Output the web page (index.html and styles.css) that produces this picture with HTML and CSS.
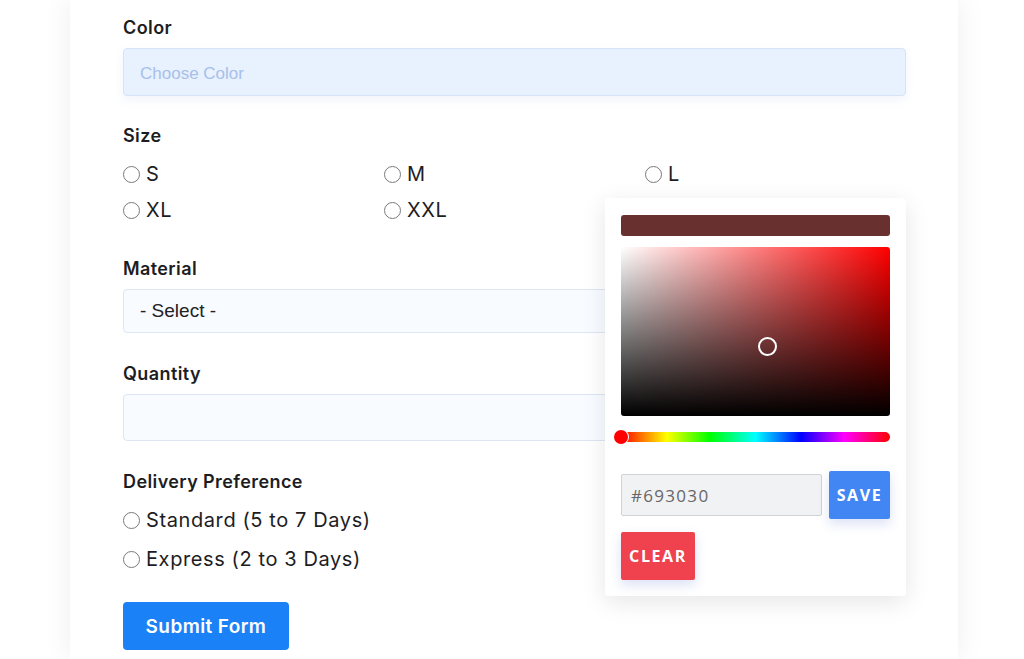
FILE: index.html
```html
<!DOCTYPE html>
<html lang="en">
<head>
  <meta charset="UTF-8">
  <meta name="viewport" content="width=device-width, initial-scale=1.0">
  <title>Product Form - Color Picker</title>
  <link rel="stylesheet" href="styles.css">
</head>
<body>
  <div class="card">
    <form class="form" onsubmit="return false">
      <div class="field color-field">
        <label class="label" for="color">Color</label>
        <div class="color-wrap">
          <input class="input color-input" id="color" type="text" placeholder="Choose Color">

          <div class="picker">
            <div class="swatch"></div>
            <div class="sat-box">
              <span class="sat-handle"></span>
            </div>
            <div class="hue">
              <span class="hue-handle"></span>
            </div>
            <div class="picker-row">
              <input class="hex" type="text" value="#693030">
              <button class="pbtn save" type="button">Save</button>
            </div>
            <button class="pbtn clear" type="button">Clear</button>
          </div>
        </div>
      </div>

      <div class="field sizes">
        <span class="label">Size</span>
        <div class="radio-grid">
          <label class="radio"><input type="radio" name="size"> S</label>
          <label class="radio"><input type="radio" name="size"> M</label>
          <label class="radio"><input type="radio" name="size"> L</label>
          <label class="radio"><input type="radio" name="size"> XL</label>
          <label class="radio"><input type="radio" name="size"> XXL</label>
        </div>
      </div>

      <div class="field">
        <label class="label" for="material">Material</label>
        <div class="input select" id="material">- Select -</div>
      </div>

      <div class="field">
        <label class="label" for="qty">Quantity</label>
        <input class="input qty" id="qty" type="text">
      </div>

      <div class="field">
        <span class="label">Delivery Preference</span>
        <div class="radio-list">
          <label class="radio"><input type="radio" name="delivery"> Standard (5 to 7 Days)</label>
          <label class="radio"><input type="radio" name="delivery"> Express (2 to 3 Days)</label>
        </div>
      </div>

      <button class="submit" type="submit">Submit Form</button>
    </form>
  </div>
</body>
</html>
```

FILE: styles.css
```css
body {
  margin: 0;
  background-color: #ffffff;
  font-family: Inter, Lato, "Noto Sans", sans-serif;
  color: #1d1d1f;
}
.card {
  width: 888px;
  margin-left: 70px;
  min-height: 659px;
  box-sizing: border-box;
  padding: 16px 52px 0 53px;
  background-color: #fff;
  box-shadow: 0 0 28px rgba(0, 0, 0, 0.07);
}
.field {
  margin-bottom: 29px;
}
.color-field {
  margin-bottom: 28px;
}
.sizes {
  margin-bottom: 33px;
}
.label {
  display: block;
  font-size: 18px;
  line-height: 24px;
  font-weight: 600;
  letter-spacing: 0.4px;
  margin-bottom: 8px;
}
.input {
  display: block;
  width: 100%;
  box-sizing: border-box;
  border: 1px solid #dde6f3;
  border-radius: 4px;
  background-color: #f8fbff;
  font-family: "Liberation Sans", Arial, sans-serif;
  outline: none;
}
.color-wrap {
  position: relative;
}
.color-input {
  height: 48px;
  padding: 3px 16px 0;
  font-size: 17px;
  background-color: #e8f1fe;
  border-color: #d6e4f8;
  box-shadow: 0 4px 10px rgba(80, 120, 200, 0.08);
}
.color-input::placeholder {
  color: #a7bfea;
}
.select {
  height: 44px;
  line-height: 42px;
  margin-top: 1px;
  padding: 0 16px;
  font-size: 19px;
  color: #222;
}
.qty {
  height: 47px;
}

/* radios */
.radio-grid {
  display: grid;
  grid-template-columns: repeat(3, 261px);
  row-gap: 8px;
  margin-top: 12px;
}
.radio-list {
  display: flex;
  flex-direction: column;
  gap: 11px;
  margin-top: 12px;
}
.radio {
  display: flex;
  align-items: center;
  gap: 6px;
  font-size: 20px;
  line-height: 28px;
  letter-spacing: 0.6px;
  color: #1d1d1f;
}
.radio input {
  appearance: none;
  -webkit-appearance: none;
  width: 17px;
  height: 17px;
  margin: 0;
  border: 1px solid #7a7a7a;
  border-radius: 50%;
  background-color: #fff;
}

.submit {
  width: 166px;
  height: 48px;
  border: none;
  border-radius: 4px;
  background-color: #1a82f6;
  color: #fff;
  font-family: Inter, Lato, "Noto Sans", sans-serif;
  font-size: 19px;
  font-weight: 600;
  letter-spacing: 0.4px;
  cursor: pointer;
}

/* color picker popup */
.picker {
  position: absolute;
  top: 150px;
  left: 482px;
  width: 301px;
  height: 398px;
  box-sizing: border-box;
  padding: 17px 16px;
  background-color: #fff;
  border-radius: 3px;
  box-shadow: 0 6px 24px rgba(0, 0, 0, 0.1);
}
.swatch {
  height: 21px;
  border-radius: 3px;
  background-color: #693030;
}
.sat-box {
  position: relative;
  height: 169px;
  margin-top: 11px;
  border-radius: 3px;
  background:
    linear-gradient(to bottom, rgba(0, 0, 0, 0), #000),
    linear-gradient(to right, #fff, #ff0000);
}
.sat-handle {
  position: absolute;
  left: 137px;
  top: 90px;
  width: 15px;
  height: 15px;
  border: 2px solid #fff;
  border-radius: 50%;
}
.hue {
  position: relative;
  height: 10px;
  margin-top: 16px;
  border-radius: 5px;
  background: linear-gradient(to right, #f00 0%, #ff0 17%, #0f0 33%, #0ff 50%, #00f 67%, #f0f 83%, #f00 100%);
}
.hue-handle {
  position: absolute;
  left: -7px;
  top: -2px;
  width: 14px;
  height: 14px;
  border-radius: 50%;
  background-color: #ff0000;
  box-shadow: 0 0 0 1px #fff;
}
.picker-row {
  display: flex;
  align-items: center;
  gap: 7px;
  margin-top: 29px;
}
.hex {
  width: 201px;
  height: 42px;
  box-sizing: border-box;
  padding: 0 9px;
  border: 1px solid #cfd2d6;
  border-radius: 2px;
  background-color: #f1f2f4;
  color: #666;
  font-family: "Open Sans", sans-serif;
  font-size: 17px;
  letter-spacing: 1.3px;
  outline: none;
}
.pbtn {
  height: 48px;
  border: none;
  border-radius: 2px;
  color: #fff;
  font-family: "Open Sans", sans-serif;
  font-size: 16px;
  font-weight: 700;
  letter-spacing: 1.6px;
  text-transform: uppercase;
  box-shadow: 0 5px 12px rgba(60, 90, 200, 0.18);
}
.save {
  width: 61px;
  padding: 0;
  background-color: #4286f4;
}
.clear {
  display: block;
  width: 74px;
  padding: 0;
  margin-top: 13px;
  background-color: #f0414f;
}
```
